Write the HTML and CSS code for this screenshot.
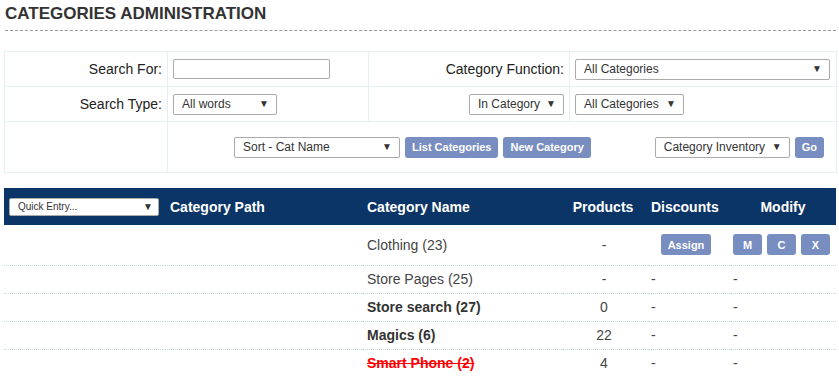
FILE: index.html
```html
<!DOCTYPE html>
<html lang="en">
<head>
    <meta charset="UTF-8">
    <title>Categories Administration</title>
    <link rel="stylesheet" href="styles.css">
</head>
<body>
<h1 class="page-title">CATEGORIES ADMINISTRATION</h1>

<table class="filters">
    <tr class="row-a">
        <td class="lbl c1">Search For:</td>
        <td class="c2"><input type="text" class="txt"></td>
        <td class="lbl c3">Category Function:</td>
        <td class="c4"><span class="sel w-func"><select><option>All Categories</option></select></span></td>
    </tr>
    <tr class="row-a">
        <td class="lbl">Search Type:</td>
        <td><span class="sel w-type"><select><option>All words</option></select></span></td>
        <td class="lbl"><span class="sel w-in"><select><option>In Category</option></select></span></td>
        <td><span class="sel w-all"><select><option>All Categories</option></select></span></td>
    </tr>
    <tr class="row-b">
        <td></td>
        <td colspan="3">
            <div class="actions">
                <div class="group">
                    <span class="sel w-sort"><select><option>Sort - Cat Name</option></select></span>
                    <button class="btn">List Categories</button>
                    <button class="btn">New Category</button>
                </div>
                <div class="group">
                    <span class="sel w-inv"><select><option>Category Inventory</option></select></span>
                    <button class="btn">Go</button>
                </div>
            </div>
        </td>
    </tr>
</table>

<table class="cats">
    <tr class="head">
        <th class="col-quick"><span class="sel quick"><select><option>Quick Entry...</option></select></span></th>
        <th class="col-path">Category Path</th>
        <th class="col-name">Category Name</th>
        <th class="col-prod">Products</th>
        <th class="col-disc">Discounts</th>
        <th class="col-mod">Modify</th>
    </tr>
    <tr class="first">
        <td></td>
        <td></td>
        <td class="name">Clothing (23)</td>
        <td class="prod">-</td>
        <td class="disc"><button class="btn assign">Assign</button></td>
        <td class="mod"><button class="btn sq">M</button><button class="btn sq">C</button><button class="btn sq">X</button></td>
    </tr>
    <tr>
        <td></td>
        <td></td>
        <td class="name">Store Pages (25)</td>
        <td class="prod">-</td>
        <td class="disc">-</td>
        <td class="mod dash">-</td>
    </tr>
    <tr>
        <td></td>
        <td></td>
        <td class="name bold">Store search (27)</td>
        <td class="prod">0</td>
        <td class="disc">-</td>
        <td class="mod dash">-</td>
    </tr>
    <tr>
        <td></td>
        <td></td>
        <td class="name bold">Magics (6)</td>
        <td class="prod">22</td>
        <td class="disc">-</td>
        <td class="mod dash">-</td>
    </tr>
    <tr>
        <td></td>
        <td></td>
        <td class="name bold off">Smart Phone (2)</td>
        <td class="prod">4</td>
        <td class="disc">-</td>
        <td class="mod dash">-</td>
    </tr>
</table>
</body>
</html>
```

FILE: styles.css
```css
*{
    margin:0;
    padding:0;
    box-sizing:border-box;
}
body{
    background:#fff;
    font-family:"Liberation Sans", Arial, sans-serif;
    color:#333;
}
.page-title{
    margin:0 3px 0 5px;
    padding:5px 0 8px;
    font-size:17px;
    line-height:17px;
    font-weight:bold;
    color:#333;
    border-bottom:1px dashed #999;
}

/* filter box */
.filters{
    width:832px;
    margin:20px 0 0 4px;
    border-collapse:collapse;
    table-layout:fixed;
}
.filters td{
    border:1px solid #e4eff6;
    font-size:14px;
    color:#222;
    vertical-align:middle;
    padding:0 5px;
}
.filters .c1{ width:163px; }
.filters .c2{ width:201px; }
.filters .c3{ width:201px; }
.filters .c4{ width:267px; }
.filters .lbl{
    text-align:right;
}
.row-a td{ height:35px; }
.row-b td{ height:51px; }
.txt{
    width:157px;
    height:20px;
    border:1px solid #aaa;
    border-radius:2px;
    display:block;
}
.actions{
    display:flex;
    justify-content:space-between;
    padding:0 7px 0 61px;
}
.group{
    display:flex;
    gap:5px;
    align-items:center;
}

/* select boxes */
.sel{
    position:relative;
    display:inline-block;
    vertical-align:middle;
}
.sel select{
    -webkit-appearance:none;
    appearance:none;
    display:block;
    width:100%;
    height:21px;
    border:1px solid #aaa;
    border-radius:2px;
    background:#fff;
    font-family:"Liberation Sans", Arial, sans-serif;
    font-size:12px;
    color:#333;
    padding:0 0 0 8px;
}
.sel::after{
    content:"\25BC";
    position:absolute;
    right:8px;
    top:4px;
    font-size:10px;
    line-height:12px;
    color:#333;
    pointer-events:none;
}
.w-func{ width:255px; }
.w-type{ width:104px; }
.w-in{ width:95px; }
.w-all{ width:109px; }
.w-sort{ width:166px; }
.w-inv{ width:135px; }

.btn{
    height:21px;
    border:0;
    border-radius:3px;
    background:#788dc0;
    color:#fff;
    font-family:"Liberation Sans", Arial, sans-serif;
    font-size:11px;
    font-weight:bold;
    padding:0 7px;
}

/* category list */
.cats{
    width:832px;
    margin:15px 0 0 4px;
    border-collapse:collapse;
    table-layout:fixed;
}
.cats th{
    background:#0b3566;
    color:#fff;
    font-size:14px;
    font-weight:bold;
    height:37px;
    text-align:left;
    vertical-align:middle;
}
.col-quick{ width:161px; padding-left:5px; }
.col-path{ width:197px; padding-left:5px; }
.col-name{ width:200px; padding-left:5px; }
.cats th.col-prod{ width:86px; text-align:center; padding-right:4px; }
.col-disc{ width:82px; padding-left:3px; }
.cats th.col-mod{ width:106px; text-align:center; }
.quick{ width:150px; }
.quick select{
    height:18px;
    font-size:10px;
    padding-left:8px;
}
.quick::after{
    top:3px;
    right:6px;
}
.cats td{
    height:28px;
    border-bottom:1px dotted #c3d2de;
    font-size:14px;
    color:#444;
    vertical-align:middle;
}
.cats tr.first td{ height:40px; }
.cats tr:last-child td{ border-bottom:0; }
.cats .name{ padding-left:5px; }
.cats .bold{ font-weight:bold; color:#333; }
.cats .off{ color:#f00; text-decoration:line-through; }
.cats .prod{ text-align:center; padding-right:2px; }
.cats .disc{ padding-left:3px; }
.assign{
    width:50px;
    padding:0;
    margin-left:10px;
}
.cats .mod{ padding-left:3px; }
.sq{
    width:29px;
    padding:0;
    margin-right:5px;
}
```
